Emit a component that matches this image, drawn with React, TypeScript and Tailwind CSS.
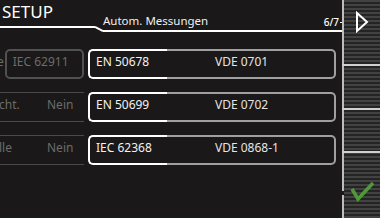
import React from "react";

const font = { fontFamily: '"Noto Sans", "DejaVu Sans", sans-serif' };

function Box({ a, b }: { a: string; b: string }) {
  return (
    <div className="ml-[4px] flex w-[248px] h-full">
      <div className="w-[79px] h-full border-2 border-r-0 border-white rounded-l-[5px] flex items-center pl-[6px] pb-[4px] text-[12px] text-[#f2f2f2]">
        {a}
      </div>
      <div className="flex-1 h-full border-2 border-l-0 border-[#a0a0a0] rounded-r-[5px] flex items-center pl-[48px] pb-[4px] text-[12px] text-[#e4e4e4]">
        {b}
      </div>
    </div>
  );
}

function GreyLeft({ t }: { t: string }) {
  return (
    <div className="w-[84px] h-full border-y border-[#4a4a4a] flex items-center pb-[4px] text-[12px] text-[#6c6c6c]">
      <span className="w-[48px] -ml-[1px] shrink-0">{t}</span>
      <span>Nein</span>
    </div>
  );
}

export default function App() {
  return (
    <div className="w-[380px] h-[218px] bg-[#1a1818] flex overflow-hidden" style={font}>
      <div className="w-[342px] flex flex-col">
        <div className="h-[32px] flex items-start">
          <div className="w-[95px] h-[28px] border-b-2 border-white pl-[2px] pt-[3px] text-[17px] leading-[17px] text-white">
            SETUP
          </div>
          <svg width="8" height="32" className="shrink-0">
            <line x1="0" y1="27" x2="8" y2="31" stroke="#ffffff" strokeWidth="2" />
          </svg>
          <div className="flex-1 h-[32px] border-b-2 border-white flex items-start">
            <span className="pt-[13.5px] text-[11.5px] leading-[14px] text-[#f0f0f0]">Autom. Messungen</span>
            <span className="ml-auto pt-[16px] text-[10px] leading-[12px] font-medium text-white">6/7</span>
            <div className="mt-[22px] ml-[1px] w-[2px] h-[1px] bg-white" />
          </div>
        </div>
        <div className="mt-[17px] flex flex-col gap-[13px]">
          <div className="h-[30px] flex">
            <div className="w-[84px] h-full flex">
              <span className="-ml-[3px] flex items-center pb-[4px] text-[12px] text-[#6c6c6c]">e</span>
              <div className="ml-[1px] flex-1 h-full border-2 border-[#515151] rounded-[5px] flex items-center pl-[6px] pb-[4px] text-[12px] text-[#6c6c6c]">
                IEC 62911
              </div>
            </div>
            <Box a="EN 50678" b="VDE 0701" />
          </div>
          <div className="h-[30px] flex">
            <GreyLeft t="cht." />
            <Box a="EN 50699" b="VDE 0702" />
          </div>
          <div className="h-[30px] flex">
            <GreyLeft t="lle" />
            <Box a="IEC 62368" b="VDE 0868-1" />
          </div>
        </div>
      </div>
      <div className="w-[38px] h-full flex flex-col bg-[repeating-linear-gradient(to_bottom,#424242_0px,#424242_2px,#242424_2px,#242424_4px)]">
        <div className="h-[64px] border-l-2 border-[#bdbdbd] flex justify-center pt-[11px]">
          <svg width="14" height="22" viewBox="0 0 14 22">
            <polygon points="2,2 12,11 2,20" fill="none" stroke="#ffffff" strokeWidth="2" />
          </svg>
        </div>
        <div className="h-[2px] bg-[#d0d0d0]" />
        <div className="h-[42px] border-l-2 border-[#bdbdbd]" />
        <div className="h-[2px] bg-[#d0d0d0]" />
        <div className="h-[41px] border-l-2 border-[#bdbdbd]" />
        <div className="h-[2px] bg-[#d0d0d0]" />
        <div className="flex-1 flex flex-col">
          <div className="h-[38px] border-l-2 border-[#bdbdbd] flex justify-center items-end">
            <svg width="26" height="22" viewBox="0 0 26 22" className="-mb-[12px] relative">
              <polyline points="3,8 9,18 24,2" fill="none" stroke="#4f9a36" strokeWidth="3.5" />
            </svg>
          </div>
          <div className="h-[4px] border-l-2 border-[#1a1818]" />
          <div className="flex-1 border-l-2 border-[#bdbdbd]" />
        </div>
      </div>
    </div>
  );
}
